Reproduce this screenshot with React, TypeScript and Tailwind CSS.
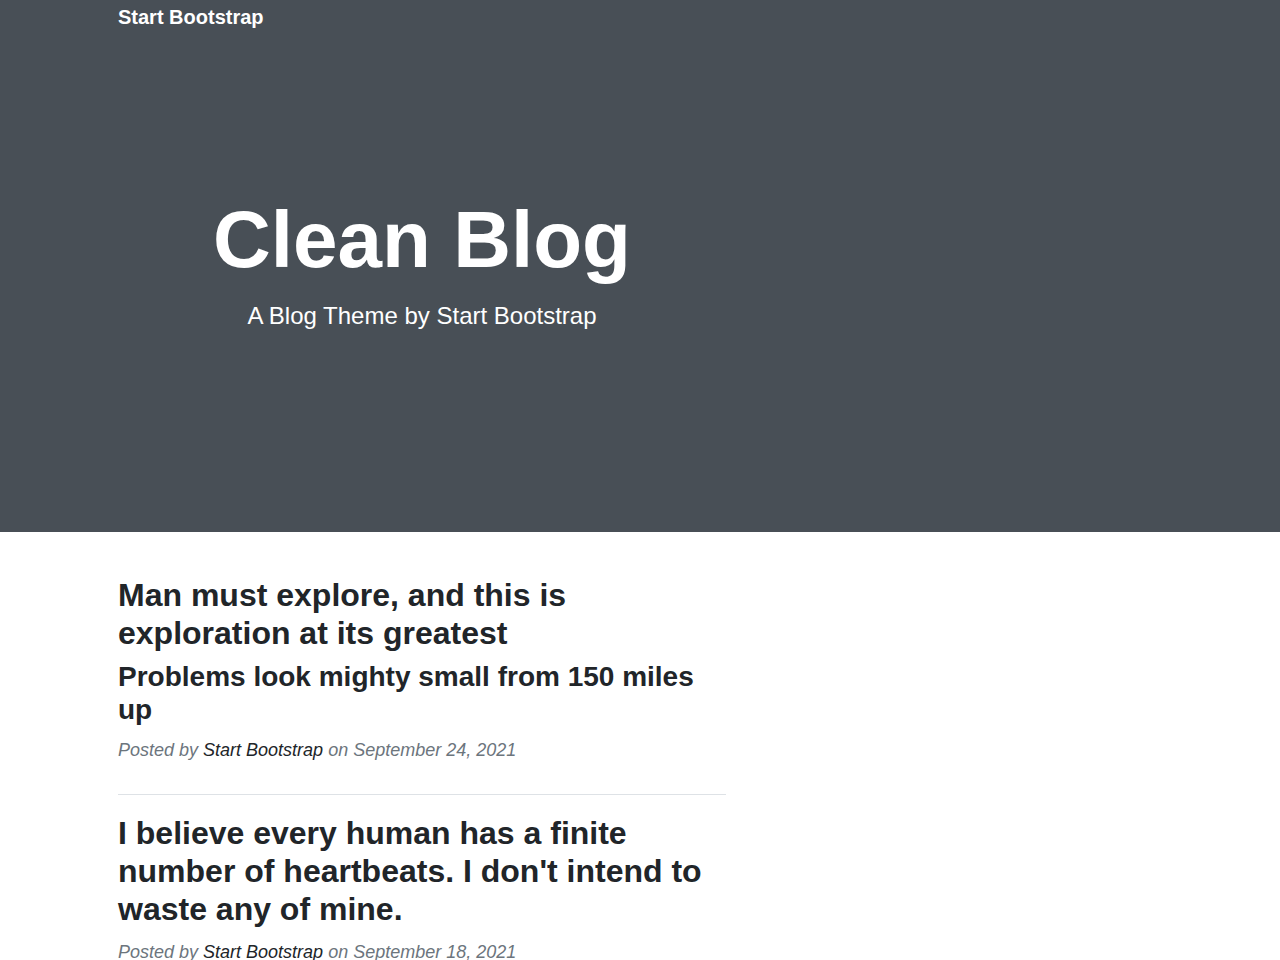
export default function App() {
  const font = { fontFamily: '"Liberation Sans", Arial, sans-serif' }
  return (
    <div style={font} className="min-h-screen bg-white text-[#212529]">
      {/* Masthead */}
      <header className="h-[532px] bg-[#484f56] text-white">
        <nav className="pl-[118px] pt-[5px]">
          <a className="text-[20px] leading-6 font-bold">Start Bootstrap</a>
        </nav>
        <div className="w-[608px] ml-[118px] text-center pt-[165px]">
          <h1 className="text-[80px] leading-[88px] font-bold">Clean Blog</h1>
          <p className="mt-[16px] text-[24px] leading-[32px]">A Blog Theme by Start Bootstrap</p>
        </div>
      </header>

      {/* Posts */}
      <main className="pl-[118px] pt-[44px]">
        <div className="w-[608px]">
          <div className="pb-[30px]">
            <h2 className="text-[32px] leading-[38px] font-bold">
              Man must explore, and this is exploration at its greatest
            </h2>
            <h3 className="mt-[8px] text-[28px] leading-[33px] font-bold">
              Problems look mighty small from 150 miles up
            </h3>
            <p className="mt-[11px] text-[18px] leading-[27px] italic text-[#6c757d]">
              Posted by <a className="text-[#212529]">Start Bootstrap</a> on September 24, 2021
            </p>
          </div>
          <hr className="border-t border-[#dee2e6]" />
          <div className="pt-[19px]">
            <h2 className="text-[32px] leading-[38px] font-bold">
              I believe every human has a finite number of heartbeats. I don't intend to waste any of mine.
            </h2>
            <p className="mt-[11px] text-[18px] leading-[27px] italic text-[#6c757d]">
              Posted by <a className="text-[#212529]">Start Bootstrap</a> on September 18, 2021
            </p>
          </div>
        </div>
      </main>
    </div>
  )
}
